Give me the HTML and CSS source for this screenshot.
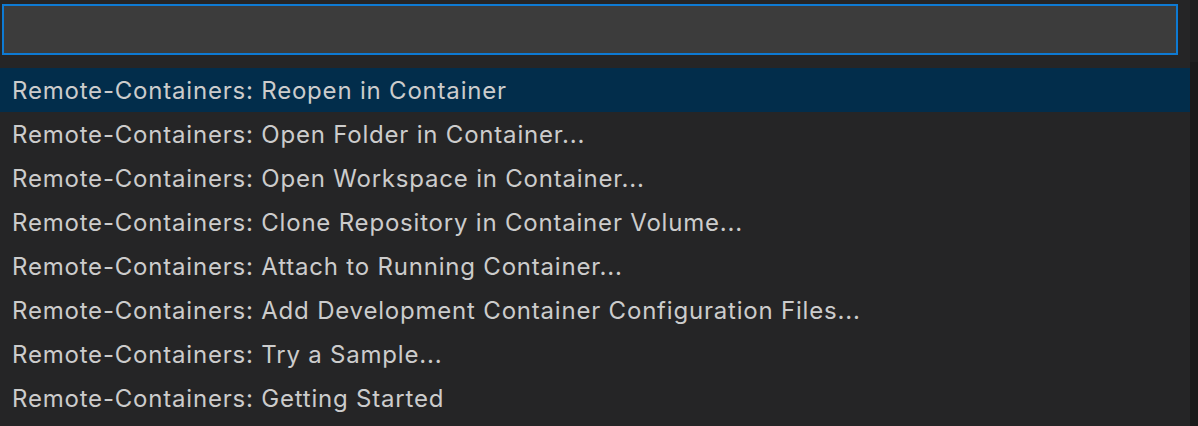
FILE: index.html
```html
<!DOCTYPE html>
<html>
<head>
<meta charset="utf-8">
<link rel="stylesheet" href="styles.css">
</head>
<body>
<div class="page">
  <div class="panel">
    <div class="input-wrap"><div class="input"></div></div>
    <ul class="list">
      <li class="item selected">Remote-Containers: Reopen in Container</li>
      <li class="item">Remote-Containers: Open Folder in Container...</li>
      <li class="item">Remote-Containers: Open Workspace in Container...</li>
      <li class="item">Remote-Containers: Clone Repository in Container Volume...</li>
      <li class="item">Remote-Containers: Attach to Running Container...</li>
      <li class="item">Remote-Containers: Add Development Container Configuration Files...</li>
      <li class="item">Remote-Containers: Try a Sample...</li>
      <li class="item">Remote-Containers: Getting Started</li>
    </ul>
  </div>
  <div class="scroll"></div>
</div>
</body>
</html>
```
FILE: styles.css
```css
html, body {
  margin: 0;
  padding: 0;
  background: #252526;
  width: 1198px;
  height: 426px;
  overflow: hidden;
}
.page {
  display: flex;
  height: 426px;
}
.panel {
  flex: 1;
  background: #252526;
}
.scroll {
  width: 8px;
  background: #1a1a1a;
  border-top: 62px solid #1f1f1f;
}
.input-wrap {
  padding: 4px 12px 0 2px;
  height: 64px;
  box-sizing: border-box;
}
.input {
  height: 51px;
  box-sizing: border-box;
  border: 2px solid #0e7ad3;
  background: #3c3c3c;
}
.list {
  list-style: none;
  margin: 4px 0 0 0;
  padding: 0;
}
.item {
  height: 44px;
  line-height: 46px;
  padding-left: 12px;
  font-family: Inter, "Noto Sans", sans-serif;
  font-size: 24px;
  letter-spacing: 0.8px;
  color: #cccccc;
  white-space: nowrap;
}
.item.selected {
  background: #022d4b;
}
```
